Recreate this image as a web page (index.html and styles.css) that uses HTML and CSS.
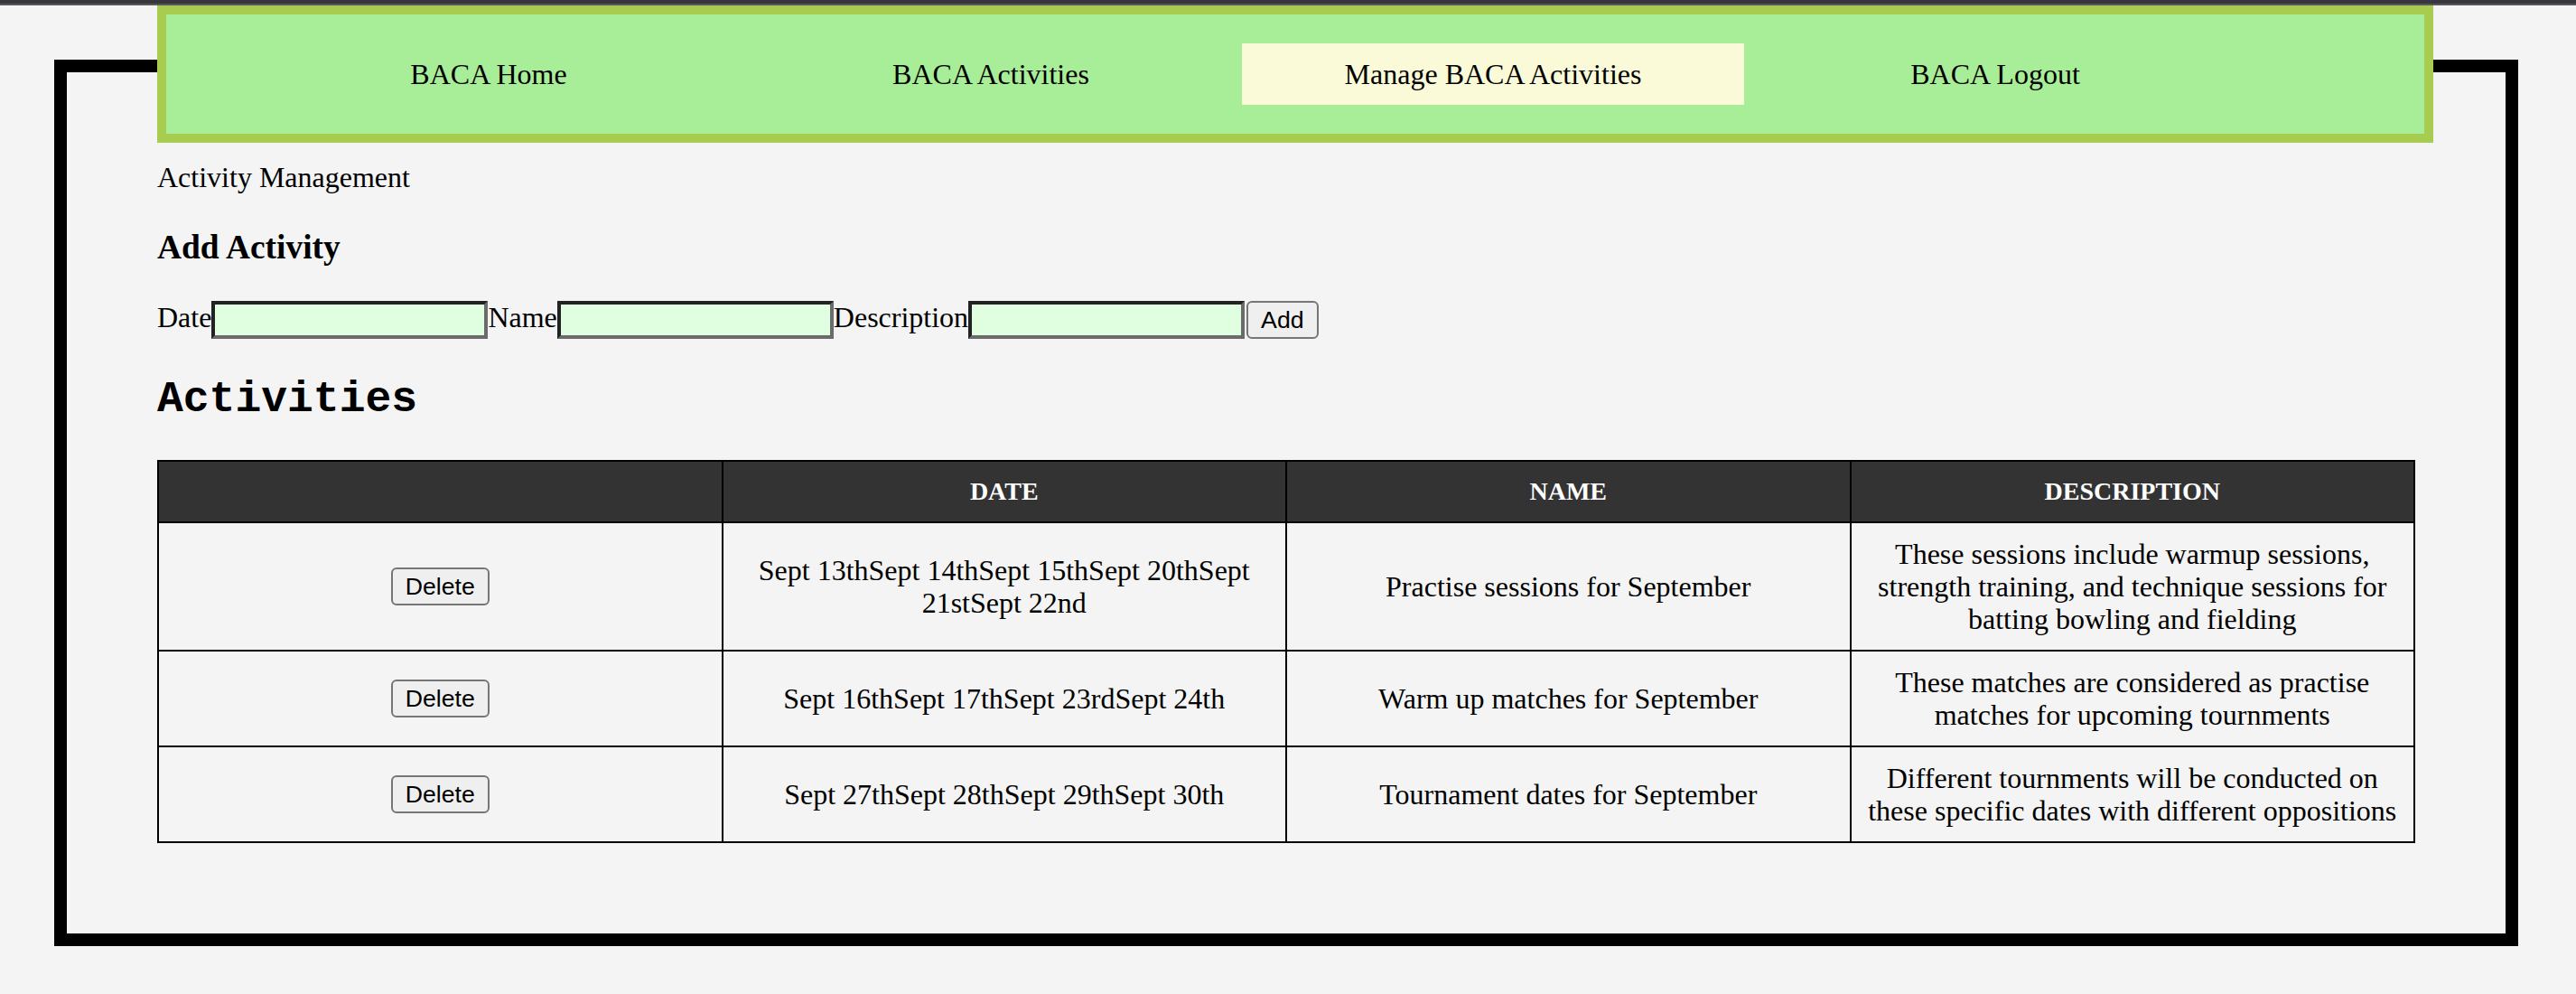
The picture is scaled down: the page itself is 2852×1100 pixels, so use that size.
FILE: index.html
```html
<!DOCTYPE html>
<html lang="en">
<head>
<meta charset="utf-8">
<title>Manage BACA Activities</title>
<link rel="stylesheet" href="styles.css">
</head>
<body>
<div class="topbar"></div>
<div class="frame">
  <div class="content">
    <nav class="nav">
      <ul class="nav-list">
        <li class="nav-item"><a href="#">BACA Home</a></li>
        <li class="nav-item"><a href="#">BACA Activities</a></li>
        <li class="nav-item active"><a href="#">Manage BACA Activities</a></li>
        <li class="nav-item"><a href="#">BACA Logout</a></li>
      </ul>
    </nav>
    <p class="page-title">Activity Management</p>
    <h3 class="add-title">Add Activity</h3>
    <form class="add-form">
      <label class="lbl">Date</label><input class="field" type="text"><label class="lbl">Name</label><input class="field" type="text"><label class="lbl">Description</label><input class="field" type="text"><button class="btn" type="button">Add</button>
    </form>
    <h2 class="list-title">Activities</h2>
    <table class="acts">
      <thead>
        <tr><th></th><th>Date</th><th>Name</th><th>Description</th></tr>
      </thead>
      <tbody>
        <tr>
          <td><button class="btn" type="button">Delete</button></td>
          <td>Sept 13thSept 14thSept 15thSept 20thSept 21stSept 22nd</td>
          <td>Practise sessions for September</td>
          <td>These sessions include warmup sessions, strength training, and technique sessions for batting bowling and fielding</td>
        </tr>
        <tr>
          <td><button class="btn" type="button">Delete</button></td>
          <td>Sept 16thSept 17thSept 23rdSept 24th</td>
          <td>Warm up matches for September</td>
          <td>These matches are considered as practise matches for upcoming tournments</td>
        </tr>
        <tr>
          <td><button class="btn" type="button">Delete</button></td>
          <td>Sept 27thSept 28thSept 29thSept 30th</td>
          <td>Tournament dates for September</td>
          <td>Different tournments will be conducted on these specific dates with different oppositions</td>
        </tr>
      </tbody>
    </table>
  </div>
</div>
</body>
</html>
```

FILE: styles.css
```css
html, body {
  margin: 0;
  padding: 0;
}
body {
  background: #f4f4f4;
  font-family: "Liberation Serif", "Times New Roman", serif;
  font-size: 32px;
  color: #000;
  height: 1100px;
  overflow: hidden;
}
.topbar {
  height: 4px;
  background: #37383c;
  border-bottom: 2px solid #56575b;
}
.frame {
  margin: 60px 64px 0 60px;
  border: 14px solid #000;
}
.content {
  padding: 0 100px 100px 100px;
}
.nav {
  margin: -74px 0 20px 0;
  width: 2500px;
  background: #a8ed98;
  border: 10px solid #a8cc4f;
}
.nav-list {
  list-style: none;
  margin: 32px 0;
  padding: 0 0 0 79px;
  display: flex;
}
.nav-item {
  width: 556px;
  padding: 16px 0;
  text-align: center;
  line-height: 36px;
}
.nav-item a {
  color: #000;
  text-decoration: none;
}
.nav-item.active {
  background: #fafad8;
}
.page-title {
  margin: 0 0 32px 0;
}
.add-title {
  font-size: 37.44px;
  font-weight: bold;
  margin: 37.44px 0;
}
.add-form {
  margin: 0;
  display: flex;
  align-items: flex-start;
  height: 42px;
}
.lbl {
  font-size: 32px;
  line-height: 36px;
}
.field {
  box-sizing: border-box;
  width: 306px;
  height: 42px;
  margin: 0;
  padding: 2px 4px;
  background: #e0ffe0;
  border: 4px solid;
  border-color: #222 #6b6b6b #6b6b6b #222;
  font-family: "Liberation Sans", Arial, sans-serif;
  font-size: 26.67px;
}
.btn {
  box-sizing: border-box;
  height: 42px;
  font-family: "Liberation Sans", Arial, sans-serif;
  font-size: 26.67px;
  line-height: 30px;
  padding: 4px 14px;
  margin: 0 0 0 2px;
  background: #efefef;
  color: #000;
  border: 2px solid #767676;
  border-radius: 6px;
}
.acts .btn {
  margin: 0;
  vertical-align: middle;
}
.list-title {
  font-family: "Liberation Mono", "Courier New", monospace;
  font-size: 48px;
  font-weight: bold;
  margin: 39.84px 0;
}
.acts {
  width: 2500px;
  table-layout: fixed;
  border-collapse: collapse;
  border: 2px solid #000;
}
.acts th {
  background: #333;
  color: #fff;
  font-size: 28px;
  font-weight: bold;
  text-transform: uppercase;
  padding: 16px;
  border: 2px solid #000;
  line-height: 34px;
}
.acts td {
  text-align: center;
  padding: 16px;
  border: 2px solid #000;
  line-height: 36px;
}
```
